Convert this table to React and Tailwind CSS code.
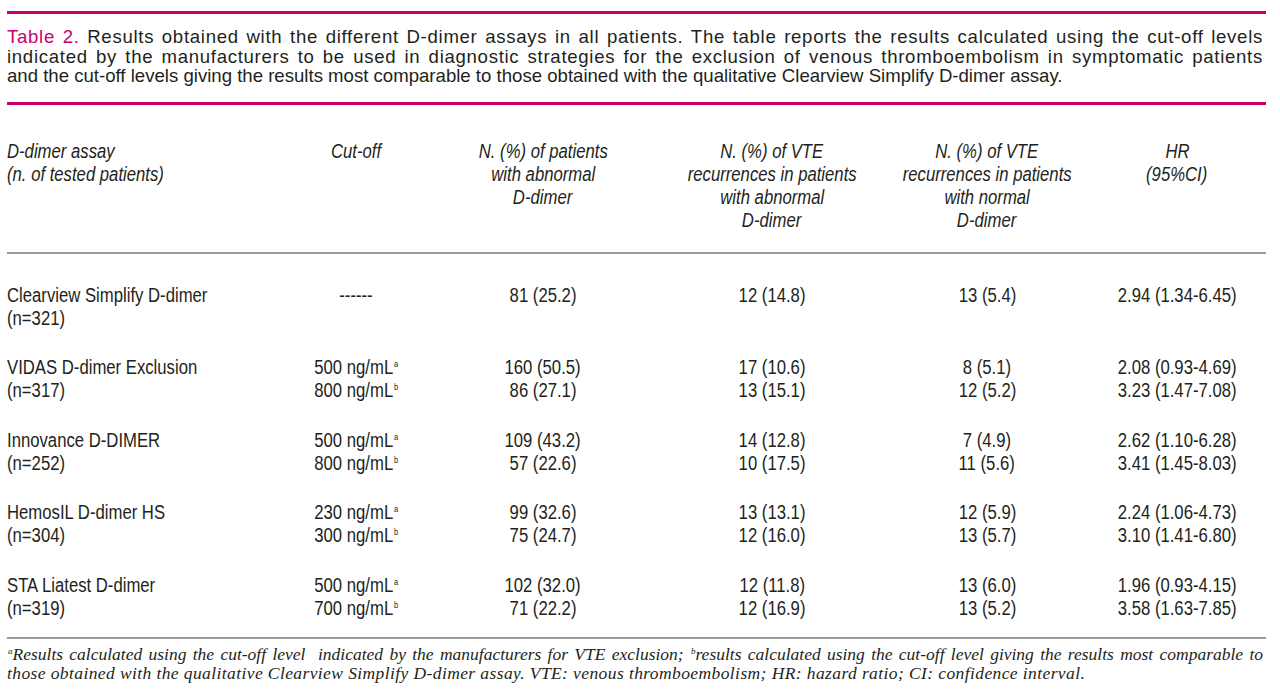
const rows = [
  {
    name: "Clearview Simplify D-dimer",
    n: "(n=321)",
    cut: [["------", ""]],
    abn: ["81 (25.2)"],
    vteAbn: ["12 (14.8)"],
    vteNorm: ["13 (5.4)"],
    hr: ["2.94 (1.34-6.45)"],
  },
  {
    name: "VIDAS D-dimer Exclusion",
    n: "(n=317)",
    cut: [["500 ng/mL", "a"], ["800 ng/mL", "b"]],
    abn: ["160 (50.5)", "86 (27.1)"],
    vteAbn: ["17 (10.6)", "13 (15.1)"],
    vteNorm: ["8 (5.1)", "12 (5.2)"],
    hr: ["2.08 (0.93-4.69)", "3.23 (1.47-7.08)"],
  },
  {
    name: "Innovance D-DIMER",
    n: "(n=252)",
    cut: [["500 ng/mL", "a"], ["800 ng/mL", "b"]],
    abn: ["109 (43.2)", "57 (22.6)"],
    vteAbn: ["14 (12.8)", "10 (17.5)"],
    vteNorm: ["7 (4.9)", "11 (5.6)"],
    hr: ["2.62 (1.10-6.28)", "3.41 (1.45-8.03)"],
  },
  {
    name: "HemosIL D-dimer HS",
    n: "(n=304)",
    cut: [["230 ng/mL", "a"], ["300 ng/mL", "b"]],
    abn: ["99 (32.6)", "75 (24.7)"],
    vteAbn: ["13 (13.1)", "12 (16.0)"],
    vteNorm: ["12 (5.9)", "13 (5.7)"],
    hr: ["2.24 (1.06-4.73)", "3.10 (1.41-6.80)"],
  },
  {
    name: "STA Liatest D-dimer",
    n: "(n=319)",
    cut: [["500 ng/mL", "a"], ["700 ng/mL", "b"]],
    abn: ["102 (32.0)", "71 (22.2)"],
    vteAbn: ["12 (11.8)", "12 (16.9)"],
    vteNorm: ["13 (6.0)", "13 (5.2)"],
    hr: ["1.96 (0.93-4.15)", "3.58 (1.63-7.85)"],
  },
]

const sans = { fontFamily: '"Liberation Sans", Arial, sans-serif' }

// condensed look: Arial squeezed horizontally
const Line = ({ children, left }) => (
  <span
    className={
      "inline-block whitespace-nowrap scale-x-[0.835] " + (left ? "origin-left" : "origin-center")
    }
  >
    {children}
  </span>
)

const Cell = ({ items, left, extra = "" }) => (
  <div className={"flex flex-col " + (left ? "items-start " : "items-center ") + extra}>
    {items.map((t, i) => (
      <Line key={i} left={left}>
        {t}
      </Line>
    ))}
  </div>
)

const Sup = ({ children, top = "-top-[7px]" }) => (
  <span className={"relative ml-[1px] text-[9px] leading-[0] " + top}>{children}</span>
)

const grid = "grid grid-cols-[255px_188px_186px_272px_158px_202px]"

const App = () => {
  return (
    <div className="h-[697px] w-[1280px] overflow-hidden bg-white pl-[7px] pt-[11px] text-[#231f20]">
      <div className="h-[3px] w-[1259px] bg-[#c8006e]"></div>

      <div className="mt-[13px] w-[1256px] text-[18.6px] leading-[19.5px]" style={sans}>
        <div className="whitespace-nowrap tracking-[0.7px] text-justify [text-align-last:justify]">
          <span className="text-[#c8006e]">Table 2.</span> Results obtained with the different D-dimer assays in all
          patients. The table reports the results calculated using the cut-off levels
        </div>
        <div className="whitespace-nowrap tracking-[0.7px] text-justify [text-align-last:justify]">
          indicated by the manufacturers to be used in diagnostic strategies for the exclusion of venous
          thromboembolism in symptomatic patients
        </div>
        <div className="whitespace-nowrap">
          and the cut-off levels giving the results most comparable to those obtained with the qualitative Clearview
          Simplify D-dimer assay.
        </div>
      </div>

      <div className="mt-[16px] h-[3px] w-[1259px] bg-[#c8006e]"></div>

      {/* header */}
      <div className={grid + " mt-[35px] text-[20px] italic leading-[23px]"} style={sans}>
        <Cell left items={["D-dimer assay", "(n. of tested patients)"]} />
        <Cell items={["Cut-off"]} />
        <Cell items={["N. (%) of patients", "with abnormal", "D-dimer"]} />
        <Cell items={["N. (%) of VTE", "recurrences in patients", "with abnormal", "D-dimer"]} />
        <Cell items={["N. (%) of VTE", "recurrences in patients", "with normal", "D-dimer"]} />
        <Cell items={["HR", "(95%CI)"]} extra="pl-[20px]" />
      </div>

      <div className="mt-[20px] h-[2px] w-[1259px] bg-[#9a9a9a]"></div>

      {/* body */}
      <div className="mt-[30px] flex flex-col gap-[26.5px] text-[20px] leading-[23px]" style={sans}>
        {rows.map((r) => (
          <div key={r.name} className={grid}>
            <Cell left items={[r.name, r.n]} />
            <Cell
              items={r.cut.map(([v, s]) => (
                <>
                  {v}
                  {s && <Sup>{s}</Sup>}
                </>
              ))}
            />
            <Cell items={r.abn} />
            <Cell items={r.vteAbn} />
            <Cell items={r.vteNorm} />
            <Cell items={r.hr} extra="pl-[20px]" />
          </div>
        ))}
      </div>

      <div className="mt-[17px] h-[2px] w-[1259px] bg-[#9a9a9a]"></div>

      <div
        className="mt-[6px] w-[1256px] text-[17.5px] italic leading-[19.5px]"
        style={{ fontFamily: '"Liberation Serif", "Times New Roman", serif' }}
      >
        <div className="whitespace-nowrap text-justify [text-align-last:justify]">
          <Sup top="-top-[6px]">a</Sup>Results calculated using the cut-off level&nbsp; indicated by the manufacturers
          for VTE exclusion; <Sup top="-top-[6px]">b</Sup>results calculated using the cut-off level giving the results
          most comparable to
        </div>
        <div className="whitespace-nowrap tracking-[0.4px]">
          those obtained with the qualitative Clearview Simplify D-dimer assay. VTE: venous thromboembolism; HR: hazard
          ratio; CI: confidence interval.
        </div>
      </div>
    </div>
  )
}

export default App
